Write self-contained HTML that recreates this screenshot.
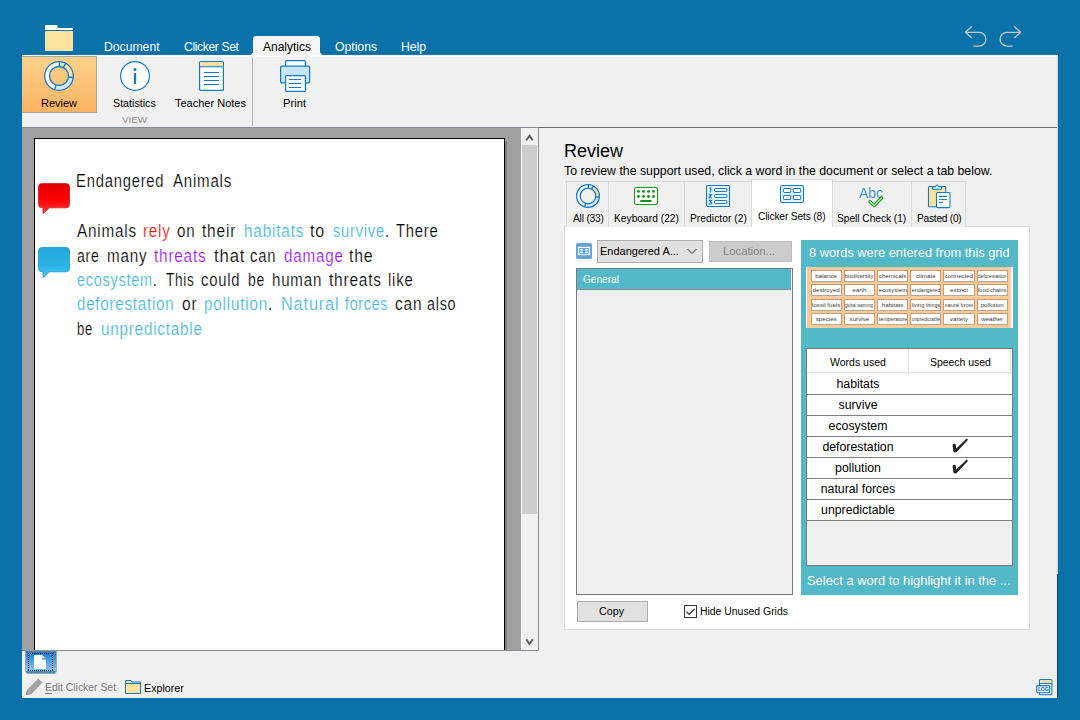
<!DOCTYPE html>
<html><head><meta charset="utf-8">
<style>
*{margin:0;padding:0;box-sizing:border-box}
html,body{width:1080px;height:720px;overflow:hidden}
body{background:#0a72a9;position:relative;font-family:"Liberation Sans",sans-serif;color:#000}
.a{position:absolute}
.t{position:absolute;white-space:nowrap;line-height:1}
svg{position:absolute;overflow:visible}
.bl{color:#5bbdd0}
.w{position:absolute;white-space:nowrap;line-height:1;font-size:17.6px;transform-origin:0 0;-webkit-text-stroke:0.2px #fff}
.gc{position:absolute;width:31.2px;height:12px;background:#fff;border:1px solid #c99a74;border-bottom-color:#b0a89f;border-radius:1px;font-size:6.2px;line-height:10.5px;text-align:center;white-space:nowrap;overflow:hidden;color:#3a3a3a}.pu{color:#a125ee}
</style></head><body>

<!-- folder icon top-left -->
<svg style="left:45px;top:25px" width="28" height="26" viewBox="0 0 28 26">
<path d="M0 5 V1 Q0 0 1 0 H11.5 Q12.5 0 12.5 1 V3 H27 Q28 3 28 4 V5 Z" fill="#fff"/>
<rect x="0" y="6" width="28" height="20" rx="0.8" fill="#fde2a0"/>
</svg>

<!-- menu tabs -->
<div class="t" style="left:104px;top:41px;font-size:12.2px;color:#fff">Document</div>
<div class="t" style="left:184px;top:41px;font-size:12.2px;letter-spacing:-0.4px;color:#fff">Clicker Set</div>
<div class="a" style="left:253px;top:36px;width:67px;height:21px;background:#f6f6f6;border-radius:3px 3px 0 0"></div>
<svg style="left:250px;top:52px" width="73" height="3" viewBox="0 0 73 3"><path d="M3 0.5 V3 H0.5 Z M70 0.5 V3 H72.5 Z" fill="#f6f6f6"/></svg>
<div class="t" style="left:263px;top:41px;font-size:12px;color:#000">Analytics</div>
<div class="t" style="left:335px;top:41px;font-size:12.2px;color:#fff">Options</div>
<div class="t" style="left:401px;top:41px;font-size:12.2px;color:#fff">Help</div>

<!-- undo / redo -->
<svg style="left:956px;top:20px" width="72" height="36" viewBox="0 0 72 36">
<g fill="none" stroke="#c4c6c8" stroke-width="1.3">
<path d="M9.3 12.3 L15.8 6.5 M9.3 12.3 L15.8 18 M9.3 12.3 H23 A6.9 6.9 0 0 1 23 26.1 H17.3"/>
<path d="M64.7 12.3 L58.2 6.5 M64.7 12.3 L58.2 18 M64.7 12.3 H51 A6.9 6.9 0 0 0 51 26.1 H56.7"/>
</g></svg>

<!-- app window -->
<div class="a" style="left:22px;top:55px;width:1036px;height:643px;background:#f0f0f0"></div>
<!-- ribbon -->
<div class="a" style="left:22px;top:55px;width:1036px;height:72px;background:#f0f0f0;border-top:2px solid #fafafa"></div>
<div class="a" style="left:22px;top:127px;width:517px;height:1px;background:#868b96"></div><div class="a" style="left:539px;top:127px;width:519px;height:1px;background:#6e6e6e"></div>

<!-- Review button -->
<div class="a" style="left:22px;top:56px;width:75px;height:57px;background:linear-gradient(#fdd28b,#fbb263);border-top:1px solid #a8a8a8;border-right:1px solid #a8a8a8;border-bottom:1px solid #a8a8a8"></div>
<svg style="left:44px;top:61px" width="30" height="30" viewBox="0 0 30 30">
<path d="M15.50 0.71A14.3 14.3 0 0 1 21.71 2.37L19.46 6.61A9.5 9.5 0 0 0 15.33 5.51Z" fill="#c5f0c5"/>
<path d="M21.71 2.37A14.3 14.3 0 0 1 29.22 16.49L24.45 15.99A9.5 9.5 0 0 0 19.46 6.61Z" fill="#fde3a5"/>
<path d="M29.22 16.49A14.3 14.3 0 0 1 10.58 28.60L12.06 24.04A9.5 9.5 0 0 0 24.45 15.99Z" fill="#d5ebfb"/>
<path d="M10.58 28.60A14.3 14.3 0 0 1 15.50 0.71L15.33 5.51A9.5 9.5 0 0 0 12.06 24.04Z" fill="#ffffff"/>
<circle cx="15" cy="15" r="14.3" fill="none" stroke="#1a78c6" stroke-width="1.3"/>
<circle cx="15" cy="15" r="9.5" fill="none" stroke="#1a78c6" stroke-width="1.3"/>
<path d="M15.50 0.71L15.33 5.51" stroke="#1a78c6" stroke-width="1.3"/>
<path d="M21.71 2.37L19.46 6.61" stroke="#1a78c6" stroke-width="1.3"/>
<path d="M29.22 16.49L24.45 15.99" stroke="#1a78c6" stroke-width="1.3"/>
<path d="M10.58 28.60L12.06 24.04" stroke="#1a78c6" stroke-width="1.3"/>
</svg>
<div class="t" style="left:41px;top:98px;font-size:11px">Review</div>

<!-- Statistics -->
<svg style="left:120px;top:61px" width="30" height="30" viewBox="0 0 30 30">
<circle cx="15" cy="15" r="14.4" fill="#fff" stroke="#1578c8" stroke-width="1.2"/>
<circle cx="15" cy="8.6" r="1.5" fill="#1578c8"/>
<rect x="13.85" y="12" width="2.3" height="11" fill="#1578c8"/>
</svg>
<div class="t" style="left:113px;top:98px;font-size:10.7px">Statistics</div>

<!-- Teacher notes -->
<svg style="left:199px;top:61px" width="25" height="30" viewBox="0 0 25 30">
<rect x="0.6" y="0.6" width="23.8" height="28.8" rx="1" fill="#fff" stroke="#1578c8" stroke-width="1.2"/>
<rect x="1.2" y="1.2" width="22.6" height="4.3" fill="#fde29f"/><path d="M1 5.8H24" stroke="#1578c8" stroke-width="1"/>
<path d="M5 11.5H20M5 15.5H20M5 19.5H20M5 23.5H20" stroke="#1578c8" stroke-width="1"/>
</svg>
<div class="t" style="left:175px;top:98px;font-size:11px">Teacher Notes</div>
<div class="t" style="left:122px;top:115px;font-size:9.8px;color:#8d8d8d">VIEW</div>

<div class="a" style="left:252px;top:58px;width:1px;height:68px;background:#b4b4b4"></div>

<!-- Print -->
<svg style="left:280px;top:60px" width="31" height="32" viewBox="0 0 31 32">
<rect x="5.6" y="0.6" width="19.8" height="7" rx="1" fill="#fff" stroke="#1578c8" stroke-width="1.2"/>
<rect x="0.6" y="6.2" width="29" height="16.6" rx="1" fill="#c7e6fb" stroke="#1578c8" stroke-width="1.2"/>
<rect x="5.6" y="15.6" width="19.8" height="15.8" rx="1" fill="#fff" stroke="#1578c8" stroke-width="1.2"/>
<path d="M9 19.5H21M9 23.5H21M9 27.5H21" stroke="#1578c8" stroke-width="1.1"/>
</svg>
<div class="t" style="left:283px;top:98px;font-size:11.2px">Print</div>

<!-- document area -->
<div class="a" style="left:22px;top:128px;width:499px;height:522px;background:#a0a0a0"></div>
<div class="a" style="left:34px;top:138px;width:471px;height:512px;background:#fff;border:1px solid #000;border-bottom:none;border-right-width:1px"></div>
<div class="a" style="left:505px;top:141px;width:2px;height:509px;background:linear-gradient(90deg,#707070,#8c8c8c)"></div>
<!-- scrollbar -->
<div class="a" style="left:521px;top:128px;width:17px;height:522px;background:#f0f0f0;border-left:1px solid #fff"></div>
<div class="a" style="left:522px;top:145px;width:15px;height:369px;background:#cdcdcd"></div>
<svg style="left:524px;top:132px" width="11" height="11" viewBox="0 0 11 11"><path d="M2.3 8.3 L5.5 3.6 L8.7 8.3" fill="none" stroke="#5a5a5a" stroke-width="1.9"/></svg>
<svg style="left:524px;top:636px" width="11" height="11" viewBox="0 0 11 11"><path d="M2.3 3.3 L5.5 8.0 L8.7 3.3" fill="none" stroke="#5a5a5a" stroke-width="1.9"/></svg>
<div class="a" style="left:538px;top:128px;width:1px;height:523px;background:#868b96"></div>
<div class="a" style="left:22px;top:650px;width:517px;height:1px;background:#868b96"></div>


<!-- doc content -->
<svg style="left:38px;top:183px" width="32" height="31" viewBox="0 0 32 31">
<defs><linearGradient id="gr" x1="0" y1="0" x2="0" y2="1"><stop offset="0" stop-color="#e00000"/><stop offset="0.55" stop-color="#ff0000"/><stop offset="1" stop-color="#ff3d3d"/></linearGradient>
<linearGradient id="gb" x1="0" y1="0" x2="0" y2="1"><stop offset="0" stop-color="#24a6dc"/><stop offset="0.6" stop-color="#2db3e6"/><stop offset="1" stop-color="#43c6f4"/></linearGradient></defs>
<path d="M4 0.5H28A3.5 3.5 0 0 1 31.5 4V21.3A3.5 3.5 0 0 1 28 24.8H11.5L5 30.5V24.8H4A3.5 3.5 0 0 1 0.5 21.3V4A3.5 3.5 0 0 1 4 0.5Z" fill="url(#gr)" stroke="#cc2020" stroke-width="0.8"/>
</svg>
<svg style="left:38px;top:247px" width="32" height="31" viewBox="0 0 32 31">
<path d="M4 0.5H28A3.5 3.5 0 0 1 31.5 4V21.3A3.5 3.5 0 0 1 28 24.8H11.5L5 30.5V24.8H4A3.5 3.5 0 0 1 0.5 21.3V4A3.5 3.5 0 0 1 4 0.5Z" fill="url(#gb)" stroke="#1e96c8" stroke-width="0.8"/>
</svg>
<div id="doc">
<div class="w" style="left:76.40px;top:172.60px;letter-spacing:0.9px;transform:scaleX(0.8421);color:#000">Endangered</div>
<div class="w" style="left:173.10px;top:172.60px;letter-spacing:0.9px;transform:scaleX(0.8558);color:#000">Animals</div>
<div class="w" style="left:76.50px;top:223.20px;letter-spacing:0.9px;transform:scaleX(0.8705);color:#000">Animals</div>
<div class="w" style="left:143.10px;top:223.20px;letter-spacing:0.9px;transform:scaleX(0.8660);color:#e41414">rely</div>
<div class="w" style="left:177.40px;top:223.20px;letter-spacing:0.9px;transform:scaleX(0.8591);color:#000">on</div>
<div class="w" style="left:202.40px;top:223.20px;letter-spacing:0.9px;transform:scaleX(0.8799);color:#000">their</div>
<div class="w" style="left:243.70px;top:223.20px;letter-spacing:0.9px;transform:scaleX(0.8742);color:#46b8d4">habitats</div>
<div class="w" style="left:310.30px;top:223.20px;letter-spacing:0.9px;transform:scaleX(0.9112);color:#000">to</div>
<div class="w" style="left:332.70px;top:223.20px;letter-spacing:0.9px;transform:scaleX(0.8365);color:#46b8d4">survive<span style="color:#000">.</span></div>
<div class="w" style="left:395.80px;top:223.20px;letter-spacing:0.9px;transform:scaleX(0.8430);color:#000">There</div>
<div class="w" style="left:77.00px;top:247.60px;letter-spacing:0.9px;transform:scaleX(0.7965);color:#000">are</div>
<div class="w" style="left:106.80px;top:247.60px;letter-spacing:0.9px;transform:scaleX(0.8657);color:#000">many</div>
<div class="w" style="left:154.30px;top:247.60px;letter-spacing:0.9px;transform:scaleX(0.8732);color:#9a14f0">threats</div>
<div class="w" style="left:213.50px;top:247.60px;letter-spacing:0.9px;transform:scaleX(0.9511);color:#000">that</div>
<div class="w" style="left:250.20px;top:247.60px;letter-spacing:0.9px;transform:scaleX(0.8414);color:#000">can</div>
<div class="w" style="left:283.80px;top:247.60px;letter-spacing:0.9px;transform:scaleX(0.8677);color:#9a14f0">damage</div>
<div class="w" style="left:348.75px;top:247.60px;letter-spacing:0.9px;transform:scaleX(0.9005);color:#000">the</div>
<div class="w" style="left:77.00px;top:272.20px;letter-spacing:0.9px;transform:scaleX(0.8218);color:#46b8d4">ecosystem<span style="color:#000">.</span></div>
<div class="w" style="left:165.80px;top:272.20px;letter-spacing:0.9px;transform:scaleX(0.7735);color:#000">This</div>
<div class="w" style="left:201.25px;top:272.20px;letter-spacing:0.9px;transform:scaleX(0.8420);color:#000">could</div>
<div class="w" style="left:248.10px;top:272.20px;letter-spacing:0.9px;transform:scaleX(0.7957);color:#000">be</div>
<div class="w" style="left:272.20px;top:272.20px;letter-spacing:0.9px;transform:scaleX(0.8588);color:#000">human</div>
<div class="w" style="left:328.60px;top:272.20px;letter-spacing:0.9px;transform:scaleX(0.8783);color:#000">threats</div>
<div class="w" style="left:388.30px;top:272.20px;letter-spacing:0.9px;transform:scaleX(0.8488);color:#000">like</div>
<div class="w" style="left:77.00px;top:296.20px;letter-spacing:0.9px;transform:scaleX(0.8591);color:#46b8d4">deforestation</div>
<div class="w" style="left:181.80px;top:296.20px;letter-spacing:0.9px;transform:scaleX(0.8828);color:#000">or</div>
<div class="w" style="left:204.30px;top:296.20px;letter-spacing:0.9px;transform:scaleX(0.8695);color:#46b8d4">pollution<span style="color:#000">.</span></div>
<div class="w" style="left:280.60px;top:296.20px;letter-spacing:0.9px;transform:scaleX(0.9268);color:#46b8d4">Natural</div>
<div class="w" style="left:344.50px;top:296.20px;letter-spacing:0.9px;transform:scaleX(0.8088);color:#46b8d4">forces</div>
<div class="w" style="left:394.80px;top:296.20px;letter-spacing:0.9px;transform:scaleX(0.8779);color:#000">can</div>
<div class="w" style="left:427.40px;top:296.20px;letter-spacing:0.9px;transform:scaleX(0.8175);color:#000">also</div>
<div class="w" style="left:77.00px;top:320.60px;letter-spacing:0.9px;transform:scaleX(0.7420);color:#000">be</div>
<div class="w" style="left:100.60px;top:320.60px;letter-spacing:0.9px;transform:scaleX(0.8663);color:#46b8d4">unpredictable</div>
</div>
<!-- RIGHT PANEL -->
<div class="t" style="left:564px;top:142px;font-size:18px">Review</div>
<div class="t" style="left:564px;top:165px;font-size:12.32px">To review the support used, click a word in the document or select a tab below.</div>


<!-- tabs -->
<div class="a" style="left:564px;top:226px;width:466px;height:404px;background:#fff;border:1px solid #d9d9d9"></div>
<div class="a" style="left:566px;top:181px;width:400px;height:46px;background:#f0f0f0;border:1px solid #d9d9d9;border-bottom:none"></div>
<div class="a" style="left:608px;top:181px;width:1px;height:46px;background:#d9d9d9"></div>
<div class="a" style="left:684px;top:181px;width:1px;height:46px;background:#d9d9d9"></div>
<div class="a" style="left:911px;top:181px;width:1px;height:46px;background:#d9d9d9"></div>
<div class="a" style="left:751px;top:179px;width:82px;height:48px;background:#fff;border:1px solid #d9d9d9;border-bottom:none"></div><div class="a" style="left:752px;top:226px;width:80px;height:2px;background:#fff"></div>

<!-- All icon -->
<svg style="left:576px;top:184px" width="24" height="24" viewBox="0 0 24 24">
<path d="M12.40 0.61A11.4 11.4 0 0 1 17.35 1.93L15.66 5.11A7.8 7.8 0 0 0 12.27 4.20Z" fill="#c5f0c5"/>
<path d="M17.35 1.93A11.4 11.4 0 0 1 23.34 13.19L19.76 12.82A7.8 7.8 0 0 0 15.66 5.11Z" fill="#fde3a5"/>
<path d="M23.34 13.19A11.4 11.4 0 0 1 8.48 22.84L9.59 19.42A7.8 7.8 0 0 0 19.76 12.82Z" fill="#d5ebfb"/>
<path d="M8.48 22.84A11.4 11.4 0 0 1 12.40 0.61L12.27 4.20A7.8 7.8 0 0 0 9.59 19.42Z" fill="#ffffff"/>
<circle cx="12" cy="12" r="11.4" fill="none" stroke="#1a78c6" stroke-width="1.3"/>
<circle cx="12" cy="12" r="7.8" fill="none" stroke="#1a78c6" stroke-width="1.3"/>
<path d="M12.40 0.61L12.27 4.20" stroke="#1a78c6" stroke-width="1.3"/>
<path d="M17.35 1.93L15.66 5.11" stroke="#1a78c6" stroke-width="1.3"/>
<path d="M23.34 13.19L19.76 12.82" stroke="#1a78c6" stroke-width="1.3"/>
<path d="M8.48 22.84L9.59 19.42" stroke="#1a78c6" stroke-width="1.3"/>
</svg>
<div class="t" style="left:573px;top:214px;font-size:10.2px;letter-spacing:-0.19px">All (33)</div>
<!-- Keyboard icon -->
<svg style="left:634px;top:187px" width="24" height="18" viewBox="0 0 24 18">
<rect x="0.5" y="0.5" width="23" height="17" rx="1.8" fill="#fff" stroke="#12951e" stroke-width="1.05"/>
<g fill="#12951e"><circle cx="4.5" cy="4.4" r="1.45"/><circle cx="9.5" cy="4.4" r="1.45"/><circle cx="14.5" cy="4.4" r="1.45"/><circle cx="19.5" cy="4.4" r="1.45"/>
<circle cx="4.5" cy="9.5" r="1.45"/><circle cx="9.5" cy="9.5" r="1.45"/><circle cx="14.5" cy="9.5" r="1.45"/><circle cx="19.5" cy="9.5" r="1.45"/></g>
<rect x="6" y="13.1" width="11.8" height="1.8" rx="0.9" fill="#12951e"/>
</svg>
<div class="t" style="left:614px;top:214px;font-size:10.2px;letter-spacing:0.03px">Keyboard (22)</div>
<!-- Predictor icon -->
<svg style="left:706px;top:185px" width="24" height="22" viewBox="0 0 24 22">
<rect x="0.5" y="0.5" width="23" height="21" rx="1" fill="#e0f2fd" stroke="#1478c6" stroke-width="1.05"/>
<g fill="#fff" stroke="#1478c6" stroke-width="1"><rect x="8.5" y="3.5" width="12.5" height="3" rx="1.4"/><rect x="8.5" y="9.5" width="12.5" height="3" rx="1.4"/><rect x="8.5" y="15.5" width="12.5" height="3" rx="1.4"/></g>
<g fill="none" stroke="#1478c6" stroke-width="1.1">
<path d="M3.6 3.6 L4.6 3 V7.3"/>
<path d="M2.9 9.6 H5.4 L3 12.8 H5.8"/>
<path d="M2.9 15.4 H5.5 L4.1 16.9 Q6 17.2 5.6 18.4 Q5.2 19.2 2.8 18.9"/>
</g>
</svg>
<div class="t" style="left:690px;top:214px;font-size:10.2px;letter-spacing:0.07px">Predictor (2)</div>
<!-- Clicker sets icon -->
<svg style="left:780px;top:185px" width="24" height="18" viewBox="0 0 24 18">
<rect x="0.5" y="0.5" width="23" height="17" rx="1.8" fill="#e3f3fd" stroke="#1478c6" stroke-width="1.05"/>
<g fill="#fff" stroke="#1478c6" stroke-width="1"><rect x="3.5" y="3.5" width="7.3" height="4" rx="0.7"/><rect x="13.3" y="3.5" width="7.3" height="4" rx="0.7"/><rect x="3.5" y="10.5" width="7.3" height="4" rx="0.7"/><rect x="13.3" y="10.5" width="7.3" height="4" rx="0.7"/></g>
</svg>
<div class="t" style="left:758px;top:212px;font-size:10.2px;letter-spacing:-0.14px">Clicker Sets (8)</div>
<!-- Spell check icon -->
<svg style="left:858px;top:185px" width="27" height="23" viewBox="0 0 27 23">
<text x="1" y="12.9" font-family="Liberation Sans" font-size="15.5" fill="#1a7cd0" stroke="#f0f0f0" stroke-width="0.2" textLength="23.8" lengthAdjust="spacingAndGlyphs">Abc</text>
<path d="M12 16.5 L16.2 20.5 L23.6 13" fill="none" stroke="#1f9b2a" stroke-width="3.3" stroke-linejoin="round" stroke-linecap="round"/>
<path d="M12 16.5 L16.2 20.5 L23.6 13" fill="none" stroke="#b8efb8" stroke-width="1.2" stroke-linejoin="round" stroke-linecap="round"/>
</svg>
<div class="t" style="left:837px;top:214px;font-size:10.2px;letter-spacing:-0.03px">Spell Check (1)</div>
<!-- Pasted icon -->
<svg style="left:928px;top:184px" width="23" height="25" viewBox="0 0 23 25">
<rect x="0.5" y="2.5" width="17.3" height="20.2" rx="1" fill="#fde2a0" stroke="#1478c6" stroke-width="1.05"/>
<path d="M4.5 2.7 H7.2 L9 0.6 L10.8 2.7 H13.5 V5.3 H4.5Z" fill="#cbe8fb" stroke="#1478c6" stroke-width="1" stroke-linejoin="round"/>
<rect x="8.5" y="8.4" width="13.5" height="15.2" rx="1" fill="#fff" stroke="#1478c6" stroke-width="1.05"/>
<path d="M11 12.5H19M11 15.4H19M11 18.4H15" stroke="#1478c6" stroke-width="1"/>
</svg>
<div class="t" style="left:917px;top:214px;font-size:10.2px;letter-spacing:-0.25px">Pasted (0)</div>

<!-- controls row -->
<svg style="left:576px;top:243px" width="16" height="16" viewBox="0 0 16 16">
<rect x="0" y="0" width="16" height="16" rx="1.6" fill="#66a3dc"/>
<rect x="2" y="3.8" width="12" height="8.3" fill="#fff"/>
<rect x="3.1" y="5" width="9.8" height="5.9" rx="0.6" fill="#66a3dc"/>
<g fill="#fff"><rect x="4" y="6" width="3" height="1.3"/><rect x="9" y="6" width="3" height="1.3"/><rect x="4" y="8.7" width="3" height="1.3"/><rect x="9" y="8.7" width="3" height="1.3"/></g>
</svg>
<div class="a" style="left:597px;top:240px;width:106px;height:23px;background:#e1e1e1;border:1px solid #adadad"></div>
<div class="t" style="left:600px;top:246px;font-size:11px">Endangered A...</div>
<svg style="left:687px;top:248px" width="10" height="7" viewBox="0 0 10 7"><path d="M0.5 1 L5 5.5 L9.5 1" fill="none" stroke="#333" stroke-width="1"/></svg>
<div class="a" style="left:709px;top:241px;width:83px;height:21px;background:#cccccc;border:1px solid #bfbfbf"></div>
<div class="t" style="left:723px;top:246px;font-size:11.27px;color:#838383">Location...</div>

<!-- list -->
<div class="a" style="left:576px;top:268px;width:217px;height:327px;background:#f0f0f0;border:1px solid #7a7a7a"></div>
<div class="a" style="left:577px;top:269px;width:214px;height:21px;background:#53b8c7;border-bottom:1px solid #8a8a8a"></div>
<div class="t" style="left:583px;top:275px;font-size:10.12px;color:#fff">General</div>

<div class="a" style="left:577px;top:601px;width:71px;height:21px;background:#e1e1e1;border:1px solid #adadad"></div>
<div class="t" style="left:599px;top:606px;font-size:10.71px">Copy</div>
<div class="a" style="left:684px;top:605px;width:13px;height:13px;background:#fff;border:1px solid #333"></div>
<svg style="left:685px;top:606px" width="11" height="11" viewBox="0 0 11 11"><path d="M1.4 5.6 L4.2 8.4 L9.6 3" fill="none" stroke="#333" stroke-width="1.3"/></svg>
<div class="t" style="left:700px;top:607px;font-size:10.42px">Hide Unused Grids</div>

<!-- teal panel -->
<div class="a" style="left:801px;top:240px;width:217px;height:355px;background:#53b8c7"></div>
<div class="t" style="left:809px;top:247px;font-size:12.8px;color:#fff">8 words were entered from this grid</div>
<div class="a" id="grid" style="left:806px;top:267px;width:207px;height:61px;background:#fccb98;border-left:1px solid #fff;border-right:2px solid #fff"></div>
<div class="a" id="table" style="left:806px;top:348px;width:207px;height:218px;background:#f0f0f0;border:1px solid #7a7a7a"></div>
<div class="t" style="left:807px;top:575px;font-size:12.9px;color:#fff">Select a word to highlight it in the ...</div>

<!-- grid cells -->
<div class="gc" style="left:810.6px;top:269.5px">balance</div>
<div class="gc" style="left:843.8px;top:269.5px"><span style="position:absolute;left:50%;top:0;transform:translateX(-50%) scaleX(0.919);transform-origin:50% 50%">biodiversity</span></div>
<div class="gc" style="left:877.0px;top:269.5px">chemicals</div>
<div class="gc" style="left:910.2px;top:269.5px">climate</div>
<div class="gc" style="left:943.4px;top:269.5px"><span style="position:absolute;left:50%;top:0;transform:translateX(-50%) scaleX(0.996);transform-origin:50% 50%">connected</span></div>
<div class="gc" style="left:976.6px;top:269.5px"><span style="position:absolute;left:50%;top:0;transform:translateX(-50%) scaleX(0.795);transform-origin:50% 50%">deforestation</span></div>
<div class="gc" style="left:810.6px;top:284.2px">destroyed</div>
<div class="gc" style="left:843.8px;top:284.2px">earth</div>
<div class="gc" style="left:877.0px;top:284.2px"><span style="position:absolute;left:50%;top:0;transform:translateX(-50%) scaleX(0.962);transform-origin:50% 50%">ecosystem</span></div>
<div class="gc" style="left:910.2px;top:284.2px"><span style="position:absolute;left:50%;top:0;transform:translateX(-50%) scaleX(0.861);transform-origin:50% 50%">endangered</span></div>
<div class="gc" style="left:943.4px;top:284.2px">extinct</div>
<div class="gc" style="left:976.6px;top:284.2px"><span style="position:absolute;left:50%;top:0;transform:translateX(-50%) scaleX(0.899);transform-origin:50% 50%">food chains</span></div>
<div class="gc" style="left:810.6px;top:298.6px"><span style="position:absolute;left:50%;top:0;transform:translateX(-50%) scaleX(0.985);transform-origin:50% 50%">fossil fuels</span></div>
<div class="gc" style="left:843.8px;top:298.6px"><span style="position:absolute;left:50%;top:0;transform:translateX(-50%) scaleX(0.683);transform-origin:50% 50%">global warming</span></div>
<div class="gc" style="left:877.0px;top:298.6px">habitats</div>
<div class="gc" style="left:910.2px;top:298.6px"><span style="position:absolute;left:50%;top:0;transform:translateX(-50%) scaleX(0.880);transform-origin:50% 50%">living things</span></div>
<div class="gc" style="left:943.4px;top:298.6px"><span style="position:absolute;left:50%;top:0;transform:translateX(-50%) scaleX(0.759);transform-origin:50% 50%">natural forces</span></div>
<div class="gc" style="left:976.6px;top:298.6px">pollution</div>
<div class="gc" style="left:810.6px;top:313.2px">species</div>
<div class="gc" style="left:843.8px;top:313.2px">survive</div>
<div class="gc" style="left:877.0px;top:313.2px"><span style="position:absolute;left:50%;top:0;transform:translateX(-50%) scaleX(0.853);transform-origin:50% 50%">temperature</span></div>
<div class="gc" style="left:910.2px;top:313.2px"><span style="position:absolute;left:50%;top:0;transform:translateX(-50%) scaleX(0.766);transform-origin:50% 50%">unpredictable</span></div>
<div class="gc" style="left:943.4px;top:313.2px">variety</div>
<div class="gc" style="left:976.6px;top:313.2px">weather</div>
<!-- table -->
<div class="a" style="left:807px;top:349px;width:205px;height:24px;background:#fff;border-bottom:1px solid #e5e5e5"></div>
<div class="a" style="left:908px;top:349px;width:1px;height:24px;background:#e5e5e5"></div>
<div class="a" style="left:1010px;top:349px;width:1px;height:24px;background:#e5e5e5"></div>
<div class="t" style="left:830px;top:357px;font-size:10.5px">Words used</div>
<div class="t" style="left:930px;top:357px;font-size:10.5px;letter-spacing:-0.05px">Speech used</div>
<div class="a" style="left:807px;top:374px;width:205px;height:21px;background:#fff;border-bottom:1px solid #7f7f7f"></div>
<div class="t" style="left:807px;width:102px;text-align:center;top:378px;font-size:12.3px">habitats</div>
<div class="a" style="left:807px;top:395px;width:205px;height:21px;background:#fff;border-bottom:1px solid #7f7f7f"></div>
<div class="t" style="left:807px;width:102px;text-align:center;top:399px;font-size:12.3px">survive</div>
<div class="a" style="left:807px;top:416px;width:205px;height:21px;background:#fff;border-bottom:1px solid #7f7f7f"></div>
<div class="t" style="left:807px;width:102px;text-align:center;top:420px;font-size:12.3px">ecosystem</div>
<div class="a" style="left:807px;top:437px;width:205px;height:21px;background:#fff;border-bottom:1px solid #7f7f7f"></div>
<div class="t" style="left:807px;width:102px;text-align:center;top:441px;font-size:12.3px">deforestation</div>
<div class="a" style="left:807px;top:458px;width:205px;height:21px;background:#fff;border-bottom:1px solid #7f7f7f"></div>
<div class="t" style="left:807px;width:102px;text-align:center;top:462px;font-size:12.3px">pollution</div>
<div class="a" style="left:807px;top:479px;width:205px;height:21px;background:#fff;border-bottom:1px solid #7f7f7f"></div>
<div class="t" style="left:807px;width:102px;text-align:center;top:483px;font-size:12.3px">natural forces</div>
<div class="a" style="left:807px;top:500px;width:205px;height:21px;background:#fff;border-bottom:1px solid #7f7f7f"></div>
<div class="t" style="left:807px;width:102px;text-align:center;top:504px;font-size:12.3px">unpredictable</div>
<svg style="left:950px;top:437px" width="20" height="18" viewBox="0 0 20 18"><path d="M2.6 8.2 C2.8 6.4 5.4 6.2 5.8 8.0 L6.2 11.4 L16.2 2 C17 1.3 18.2 2.2 17.6 3.2 L7.2 14.6 C6.2 15.8 4.2 16 3.4 14.6 Z" fill="#222"/></svg>
<svg style="left:950px;top:458px" width="20" height="18" viewBox="0 0 20 18"><path d="M2.6 8.2 C2.8 6.4 5.4 6.2 5.8 8.0 L6.2 11.4 L16.2 2 C17 1.3 18.2 2.2 17.6 3.2 L7.2 14.6 C6.2 15.8 4.2 16 3.4 14.6 Z" fill="#222"/></svg>
<div class="a" style="left:1057px;top:56px;width:1px;height:518px;background:#d6cfcc"></div>
<div class="a" style="left:1057px;top:574px;width:1px;height:124px;background:#0d3f92"></div>
<!-- bottom strip -->
<svg style="left:25px;top:651px" width="32" height="23" viewBox="0 0 32 23">
<defs><linearGradient id="tb" x1="0" y1="0" x2="0" y2="1"><stop offset="0" stop-color="#1477c8"/><stop offset="0.88" stop-color="#86c6f2"/><stop offset="0.9" stop-color="#3b9ad0"/><stop offset="1" stop-color="#2a88be"/></linearGradient></defs>
<path d="M0.5 0 H31.5 V20.5 L30 22.5 H2 L0.5 20.5 Z" fill="url(#tb)" stroke="#a8a0a0" stroke-width="0.8"/>
<g fill="#000"><rect x="3" y="2" width="1" height="1"/><rect x="3" y="19" width="1" height="1"/><rect x="5" y="2" width="1" height="1"/><rect x="5" y="19" width="1" height="1"/><rect x="7" y="2" width="1" height="1"/><rect x="7" y="19" width="1" height="1"/><rect x="9" y="2" width="1" height="1"/><rect x="9" y="19" width="1" height="1"/><rect x="11" y="2" width="1" height="1"/><rect x="11" y="19" width="1" height="1"/><rect x="13" y="2" width="1" height="1"/><rect x="13" y="19" width="1" height="1"/><rect x="15" y="2" width="1" height="1"/><rect x="15" y="19" width="1" height="1"/><rect x="17" y="2" width="1" height="1"/><rect x="17" y="19" width="1" height="1"/><rect x="19" y="2" width="1" height="1"/><rect x="19" y="19" width="1" height="1"/><rect x="21" y="2" width="1" height="1"/><rect x="21" y="19" width="1" height="1"/><rect x="23" y="2" width="1" height="1"/><rect x="23" y="19" width="1" height="1"/><rect x="25" y="2" width="1" height="1"/><rect x="25" y="19" width="1" height="1"/><rect x="27" y="2" width="1" height="1"/><rect x="27" y="19" width="1" height="1"/><rect x="3" y="4" width="1" height="1"/><rect x="27" y="4" width="1" height="1"/><rect x="3" y="6" width="1" height="1"/><rect x="27" y="6" width="1" height="1"/><rect x="3" y="8" width="1" height="1"/><rect x="27" y="8" width="1" height="1"/><rect x="3" y="10" width="1" height="1"/><rect x="27" y="10" width="1" height="1"/><rect x="3" y="12" width="1" height="1"/><rect x="27" y="12" width="1" height="1"/><rect x="3" y="14" width="1" height="1"/><rect x="27" y="14" width="1" height="1"/><rect x="3" y="16" width="1" height="1"/><rect x="27" y="16" width="1" height="1"/><rect x="3" y="18" width="1" height="1"/><rect x="27" y="18" width="1" height="1"/></g>
<path d="M9 4 H17 L21 8 V18 H9 Z" fill="#fff"/>
<path d="M17 4 L21 8 H17 Z" fill="#bfe0f8"/>
<path d="M17 8 H21" stroke="#1477c8" stroke-width="1"/>
</svg>
<svg style="left:24px;top:677px" width="20" height="20" viewBox="0 0 20 20"><path d="M2.1 17.7 L3.5 13 L14.4 2.1 L17.9 5.6 L7.2 16.7 Z" fill="#a3a3a3" stroke="#8a8a8a" stroke-width="0.7" stroke-linejoin="round"/><path d="M3.7 13.2 L7 16.5" stroke="#b8b8b8" stroke-width="0.7"/></svg>
<div class="t" style="left:45px;top:683px;font-size:10.4px;color:#7a7a7a">Edit Clicker Set</div>
<div class="a" style="left:45px;top:693px;width:7px;height:1px;background:#7a7a7a"></div>
<svg style="left:125px;top:680px" width="16" height="14" viewBox="0 0 16 14"><path d="M0.5 0.5H6L7 2H15.5V13.5H0.5Z" fill="#fde29f" stroke="#1578c8" stroke-width="1"/><path d="M0.5 3.5H15.5" stroke="#1578c8" stroke-width="1"/></svg>
<div class="t" style="left:144px;top:683px;font-size:10.7px">Explorer</div>
<svg style="left:1036px;top:679px" width="17" height="17" viewBox="0 0 17 17">
<rect x="3.5" y="0.6" width="12.4" height="15.1" rx="1" fill="#fff" stroke="#1478c6" stroke-width="1.1"/>
<rect x="4.1" y="1.2" width="11.2" height="2.9" fill="#fde29f"/>
<path d="M3.5 4.5H15.9" stroke="#1478c6" stroke-width="1"/>
<rect x="0.7" y="6.6" width="13" height="7.2" rx="1.2" fill="#dff0fc" stroke="#1478c6" stroke-width="1.1"/>
<text x="7.2" y="12.1" font-size="5.2" font-weight="bold" text-anchor="middle" fill="#1478c6" font-family="Liberation Sans" letter-spacing="-0.2">LOG</text>
</svg>

</body></html>
